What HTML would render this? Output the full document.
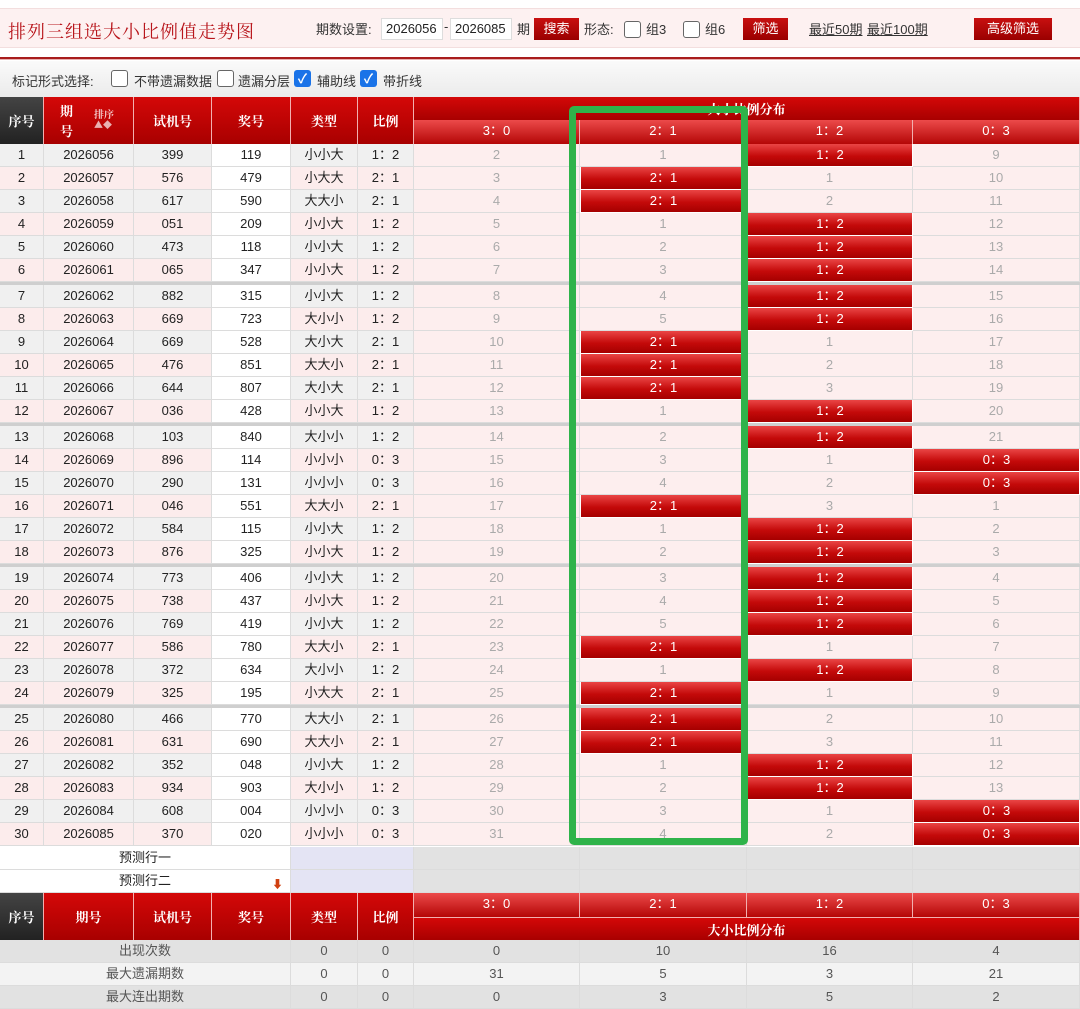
<!DOCTYPE html>
<html><head><meta charset="utf-8">
<style>
*{box-sizing:border-box;margin:0;padding:0}
body{width:1080px;height:1006px;overflow:hidden;background:#fff;font-family:"Liberation Sans","Noto Sans CJK SC",sans-serif;font-size:13px;color:#222;position:relative}
.top{position:absolute;left:0;top:8px;width:1080px;height:40px;background:#fdf1f1;border-top:1px solid #f3dede;border-bottom:1px solid #f3dede}
.title{position:absolute;left:8px;top:9px;font-family:"Noto Serif CJK SC","Liberation Serif",serif;font-size:18px;color:#b8151b;letter-spacing:1px}
.tc{position:absolute;top:10px;font-size:13px;color:#333}
.inp{position:absolute;top:9px;height:22px;background:#fff;border:1px solid #ddd;font-size:13px;padding:2px 4px}
.btn{position:absolute;top:9px;height:22px;background:linear-gradient(#c81010,#9a0000);color:#fff;font-size:13px;text-align:center;line-height:22px}
.cb{position:absolute;width:17px;height:17px;border:1px solid #666;border-radius:3px;background:#fff}
.cbk{position:absolute;width:17px;height:17px;border-radius:3px;background:#1a73e8;color:#fff;font-size:13px;line-height:17px;text-align:center;font-weight:bold}
.redline{position:absolute;left:0;top:57px;width:1080px;height:3px;background:#a81c1c;border-bottom:1px solid #e7b0b0}
.bar2{position:absolute;left:0;top:61px;width:1080px;height:36px;background:linear-gradient(#fafafa,#ebebeb)}
.row{position:absolute;left:0;width:1080px;height:23px;display:flex}
.row>div{height:23px;border-right:1px solid #dcdcdc;border-bottom:1px solid #dcdcdc;text-align:center;line-height:22px;flex:none}
.c1{width:44px}.c2{width:90px}.c3{width:78px}.c4{width:79px}.c5{width:67px}.c6{width:56px}.c7{width:166px}.c8{width:167px}.c9{width:166px}.c10{width:167px}
.o>div{background:#f0f0f0}.e>div{background:#fcecec}
.row>div.w{background:#fff}
.row>div.t{background:#fdeeee;color:#aaa}
.row>div.r{background:linear-gradient(#ea4545,#c40a0a 55%,#a50000);color:#fff;border:1px solid #fff;border-top:none}
.sep{position:absolute;left:0;width:1080px;height:3px;background:#cfcfcf}
.h{position:absolute;background:linear-gradient(#d40808,#a80000);color:#fff;font-weight:bold;text-align:center;border-right:1px solid #f2b0b0;font-family:"Noto Serif CJK SC","Liberation Serif",serif;font-size:13px}
.hs{position:absolute;background:linear-gradient(#ec4a4a,#b40606);color:#fff;text-align:center;border-right:1px solid #f2b0b0;font-size:13px;line-height:22px}
.green{position:absolute;left:569px;top:106px;width:179px;height:739px;border:7px solid #2fb34a;border-radius:5px}
.st>div{color:#555}
</style></head><body>
<div class="top">
<div class="title">排列三组选大小比例值走势图</div>
<div class="tc" style="left:316px">期数设置:</div>
<div class="inp" style="left:381px;width:62px">2026056</div>
<div class="tc" style="left:444px">-</div>
<div class="inp" style="left:450px;width:62px">2026085</div>
<div class="tc" style="left:517px">期</div>
<div class="btn" style="left:534px;width:45px">搜索</div>
<div class="tc" style="left:584px">形态:</div>
<div class="cb" style="left:624px;top:12px"></div><div class="tc" style="left:646px">组3</div>
<div class="cb" style="left:683px;top:12px"></div><div class="tc" style="left:705px">组6</div>
<div class="btn" style="left:743px;width:45px">筛选</div>
<div class="tc" style="left:809px;text-decoration:underline">最近50期</div>
<div class="tc" style="left:867px;text-decoration:underline">最近100期</div>
<div class="btn" style="left:974px;width:78px">高级筛选</div>
</div>
<div class="redline"></div>
<div class="bar2">
<div class="tc" style="left:12px;top:10px">标记形式选择:</div>
<div class="cb" style="left:111px;top:9px"></div><div class="tc" style="left:134px;top:10px">不带遗漏数据</div>
<div class="cb" style="left:217px;top:9px"></div><div class="tc" style="left:238px;top:10px">遗漏分层</div>
<div class="cbk" style="left:294px;top:9px">✓</div><div class="tc" style="left:317px;top:10px">辅助线</div>
<div class="cbk" style="left:360px;top:9px">✓</div><div class="tc" style="left:383px;top:10px">带折线</div>
</div>
<!-- header -->
<div class="h" style="left:0;top:97px;width:44px;height:47px;line-height:47px;background:linear-gradient(#444,#222)">序号</div>
<div class="h" style="left:44px;top:97px;width:90px;height:47px"><div style="position:absolute;left:16px;top:4px">期</div><div style="position:absolute;left:16px;top:24px">号</div><div style="position:absolute;left:50px;top:9px;font-size:10px;color:#f4c8c8">排序</div><div style="position:absolute;left:50px;top:21px;font-size:9px;color:#e9b0b0">▲◆</div></div>
<div class="h" style="left:134px;top:97px;width:78px;height:47px;line-height:47px">试机号</div>
<div class="h" style="left:212px;top:97px;width:79px;height:47px;line-height:47px">奖号</div>
<div class="h" style="left:291px;top:97px;width:67px;height:47px;line-height:47px">类型</div>
<div class="h" style="left:358px;top:97px;width:56px;height:47px;line-height:47px">比例</div>
<div class="h" style="left:414px;top:97px;width:666px;height:23px;line-height:23px">大小比例分布</div>
<div class="hs" style="left:414px;top:120px;width:166px;height:24px">3：0</div>
<div class="hs" style="left:580px;top:120px;width:167px;height:24px">2：1</div>
<div class="hs" style="left:747px;top:120px;width:166px;height:24px">1：2</div>
<div class="hs" style="left:913px;top:120px;width:167px;height:24px">0：3</div>

<div class="row o" style="top:144px"><div class="c1">1</div><div class="c2">2026056</div><div class="c3">399</div><div class="c4 w">119</div><div class="c5">小小大</div><div class="c6">1：2</div><div class="c7 t">2</div><div class="c8 t">1</div><div class="c9 r">1：2</div><div class="c10 t">9</div></div>
<div class="row e" style="top:167px"><div class="c1">2</div><div class="c2">2026057</div><div class="c3">576</div><div class="c4 w">479</div><div class="c5">小大大</div><div class="c6">2：1</div><div class="c7 t">3</div><div class="c8 r">2：1</div><div class="c9 t">1</div><div class="c10 t">10</div></div>
<div class="row o" style="top:190px"><div class="c1">3</div><div class="c2">2026058</div><div class="c3">617</div><div class="c4 w">590</div><div class="c5">大大小</div><div class="c6">2：1</div><div class="c7 t">4</div><div class="c8 r">2：1</div><div class="c9 t">2</div><div class="c10 t">11</div></div>
<div class="row e" style="top:213px"><div class="c1">4</div><div class="c2">2026059</div><div class="c3">051</div><div class="c4 w">209</div><div class="c5">小小大</div><div class="c6">1：2</div><div class="c7 t">5</div><div class="c8 t">1</div><div class="c9 r">1：2</div><div class="c10 t">12</div></div>
<div class="row o" style="top:236px"><div class="c1">5</div><div class="c2">2026060</div><div class="c3">473</div><div class="c4 w">118</div><div class="c5">小小大</div><div class="c6">1：2</div><div class="c7 t">6</div><div class="c8 t">2</div><div class="c9 r">1：2</div><div class="c10 t">13</div></div>
<div class="row e" style="top:259px"><div class="c1">6</div><div class="c2">2026061</div><div class="c3">065</div><div class="c4 w">347</div><div class="c5">小小大</div><div class="c6">1：2</div><div class="c7 t">7</div><div class="c8 t">3</div><div class="c9 r">1：2</div><div class="c10 t">14</div></div>
<div class="sep" style="top:282px"></div>
<div class="row o" style="top:285px"><div class="c1">7</div><div class="c2">2026062</div><div class="c3">882</div><div class="c4 w">315</div><div class="c5">小小大</div><div class="c6">1：2</div><div class="c7 t">8</div><div class="c8 t">4</div><div class="c9 r">1：2</div><div class="c10 t">15</div></div>
<div class="row e" style="top:308px"><div class="c1">8</div><div class="c2">2026063</div><div class="c3">669</div><div class="c4 w">723</div><div class="c5">大小小</div><div class="c6">1：2</div><div class="c7 t">9</div><div class="c8 t">5</div><div class="c9 r">1：2</div><div class="c10 t">16</div></div>
<div class="row o" style="top:331px"><div class="c1">9</div><div class="c2">2026064</div><div class="c3">669</div><div class="c4 w">528</div><div class="c5">大小大</div><div class="c6">2：1</div><div class="c7 t">10</div><div class="c8 r">2：1</div><div class="c9 t">1</div><div class="c10 t">17</div></div>
<div class="row e" style="top:354px"><div class="c1">10</div><div class="c2">2026065</div><div class="c3">476</div><div class="c4 w">851</div><div class="c5">大大小</div><div class="c6">2：1</div><div class="c7 t">11</div><div class="c8 r">2：1</div><div class="c9 t">2</div><div class="c10 t">18</div></div>
<div class="row o" style="top:377px"><div class="c1">11</div><div class="c2">2026066</div><div class="c3">644</div><div class="c4 w">807</div><div class="c5">大小大</div><div class="c6">2：1</div><div class="c7 t">12</div><div class="c8 r">2：1</div><div class="c9 t">3</div><div class="c10 t">19</div></div>
<div class="row e" style="top:400px"><div class="c1">12</div><div class="c2">2026067</div><div class="c3">036</div><div class="c4 w">428</div><div class="c5">小小大</div><div class="c6">1：2</div><div class="c7 t">13</div><div class="c8 t">1</div><div class="c9 r">1：2</div><div class="c10 t">20</div></div>
<div class="sep" style="top:423px"></div>
<div class="row o" style="top:426px"><div class="c1">13</div><div class="c2">2026068</div><div class="c3">103</div><div class="c4 w">840</div><div class="c5">大小小</div><div class="c6">1：2</div><div class="c7 t">14</div><div class="c8 t">2</div><div class="c9 r">1：2</div><div class="c10 t">21</div></div>
<div class="row e" style="top:449px"><div class="c1">14</div><div class="c2">2026069</div><div class="c3">896</div><div class="c4 w">114</div><div class="c5">小小小</div><div class="c6">0：3</div><div class="c7 t">15</div><div class="c8 t">3</div><div class="c9 t">1</div><div class="c10 r">0：3</div></div>
<div class="row o" style="top:472px"><div class="c1">15</div><div class="c2">2026070</div><div class="c3">290</div><div class="c4 w">131</div><div class="c5">小小小</div><div class="c6">0：3</div><div class="c7 t">16</div><div class="c8 t">4</div><div class="c9 t">2</div><div class="c10 r">0：3</div></div>
<div class="row e" style="top:495px"><div class="c1">16</div><div class="c2">2026071</div><div class="c3">046</div><div class="c4 w">551</div><div class="c5">大大小</div><div class="c6">2：1</div><div class="c7 t">17</div><div class="c8 r">2：1</div><div class="c9 t">3</div><div class="c10 t">1</div></div>
<div class="row o" style="top:518px"><div class="c1">17</div><div class="c2">2026072</div><div class="c3">584</div><div class="c4 w">115</div><div class="c5">小小大</div><div class="c6">1：2</div><div class="c7 t">18</div><div class="c8 t">1</div><div class="c9 r">1：2</div><div class="c10 t">2</div></div>
<div class="row e" style="top:541px"><div class="c1">18</div><div class="c2">2026073</div><div class="c3">876</div><div class="c4 w">325</div><div class="c5">小小大</div><div class="c6">1：2</div><div class="c7 t">19</div><div class="c8 t">2</div><div class="c9 r">1：2</div><div class="c10 t">3</div></div>
<div class="sep" style="top:564px"></div>
<div class="row o" style="top:567px"><div class="c1">19</div><div class="c2">2026074</div><div class="c3">773</div><div class="c4 w">406</div><div class="c5">小小大</div><div class="c6">1：2</div><div class="c7 t">20</div><div class="c8 t">3</div><div class="c9 r">1：2</div><div class="c10 t">4</div></div>
<div class="row e" style="top:590px"><div class="c1">20</div><div class="c2">2026075</div><div class="c3">738</div><div class="c4 w">437</div><div class="c5">小小大</div><div class="c6">1：2</div><div class="c7 t">21</div><div class="c8 t">4</div><div class="c9 r">1：2</div><div class="c10 t">5</div></div>
<div class="row o" style="top:613px"><div class="c1">21</div><div class="c2">2026076</div><div class="c3">769</div><div class="c4 w">419</div><div class="c5">小小大</div><div class="c6">1：2</div><div class="c7 t">22</div><div class="c8 t">5</div><div class="c9 r">1：2</div><div class="c10 t">6</div></div>
<div class="row e" style="top:636px"><div class="c1">22</div><div class="c2">2026077</div><div class="c3">586</div><div class="c4 w">780</div><div class="c5">大大小</div><div class="c6">2：1</div><div class="c7 t">23</div><div class="c8 r">2：1</div><div class="c9 t">1</div><div class="c10 t">7</div></div>
<div class="row o" style="top:659px"><div class="c1">23</div><div class="c2">2026078</div><div class="c3">372</div><div class="c4 w">634</div><div class="c5">大小小</div><div class="c6">1：2</div><div class="c7 t">24</div><div class="c8 t">1</div><div class="c9 r">1：2</div><div class="c10 t">8</div></div>
<div class="row e" style="top:682px"><div class="c1">24</div><div class="c2">2026079</div><div class="c3">325</div><div class="c4 w">195</div><div class="c5">小大大</div><div class="c6">2：1</div><div class="c7 t">25</div><div class="c8 r">2：1</div><div class="c9 t">1</div><div class="c10 t">9</div></div>
<div class="sep" style="top:705px"></div>
<div class="row o" style="top:708px"><div class="c1">25</div><div class="c2">2026080</div><div class="c3">466</div><div class="c4 w">770</div><div class="c5">大大小</div><div class="c6">2：1</div><div class="c7 t">26</div><div class="c8 r">2：1</div><div class="c9 t">2</div><div class="c10 t">10</div></div>
<div class="row e" style="top:731px"><div class="c1">26</div><div class="c2">2026081</div><div class="c3">631</div><div class="c4 w">690</div><div class="c5">大大小</div><div class="c6">2：1</div><div class="c7 t">27</div><div class="c8 r">2：1</div><div class="c9 t">3</div><div class="c10 t">11</div></div>
<div class="row o" style="top:754px"><div class="c1">27</div><div class="c2">2026082</div><div class="c3">352</div><div class="c4 w">048</div><div class="c5">小小大</div><div class="c6">1：2</div><div class="c7 t">28</div><div class="c8 t">1</div><div class="c9 r">1：2</div><div class="c10 t">12</div></div>
<div class="row e" style="top:777px"><div class="c1">28</div><div class="c2">2026083</div><div class="c3">934</div><div class="c4 w">903</div><div class="c5">大小小</div><div class="c6">1：2</div><div class="c7 t">29</div><div class="c8 t">2</div><div class="c9 r">1：2</div><div class="c10 t">13</div></div>
<div class="row o" style="top:800px"><div class="c1">29</div><div class="c2">2026084</div><div class="c3">608</div><div class="c4 w">004</div><div class="c5">小小小</div><div class="c6">0：3</div><div class="c7 t">30</div><div class="c8 t">3</div><div class="c9 t">1</div><div class="c10 r">0：3</div></div>
<div class="row e" style="top:823px"><div class="c1">30</div><div class="c2">2026085</div><div class="c3">370</div><div class="c4 w">020</div><div class="c5">小小小</div><div class="c6">0：3</div><div class="c7 t">31</div><div class="c8 t">4</div><div class="c9 t">2</div><div class="c10 r">0：3</div></div>

<!-- prediction rows -->
<div class="row" style="top:847px"><div style="width:291px;background:#fff">预测行一</div><div style="width:123px;background:#e4e4f4"></div><div class="c7" style="background:#e2e2e2"></div><div class="c8" style="background:#e2e2e2"></div><div class="c9" style="background:#e2e2e2"></div><div class="c10" style="background:#e2e2e2"></div></div>
<div class="row" style="top:870px"><div style="width:291px;background:#fff;position:relative">预测行二<span style="position:absolute;left:272px;top:4px;color:#d04010;font-size:11px">⬇</span></div><div style="width:123px;background:#e4e4f4"></div><div class="c7" style="background:#e2e2e2"></div><div class="c8" style="background:#e2e2e2"></div><div class="c9" style="background:#e2e2e2"></div><div class="c10" style="background:#e2e2e2"></div></div>

<!-- footer header -->
<div class="h" style="left:0;top:893px;width:44px;height:47px;line-height:47px;background:linear-gradient(#444,#222)">序号</div>
<div class="h" style="left:44px;top:893px;width:90px;height:47px;line-height:47px">期号</div>
<div class="h" style="left:134px;top:893px;width:78px;height:47px;line-height:47px">试机号</div>
<div class="h" style="left:212px;top:893px;width:79px;height:47px;line-height:47px">奖号</div>
<div class="h" style="left:291px;top:893px;width:67px;height:47px;line-height:47px">类型</div>
<div class="h" style="left:358px;top:893px;width:56px;height:47px;line-height:47px">比例</div>
<div class="hs" style="left:414px;top:893px;width:166px;height:24px">3：0</div>
<div class="hs" style="left:580px;top:893px;width:167px;height:24px">2：1</div>
<div class="hs" style="left:747px;top:893px;width:166px;height:24px">1：2</div>
<div class="hs" style="left:913px;top:893px;width:167px;height:24px">0：3</div>
<div class="h" style="left:414px;top:917px;width:666px;height:23px;line-height:23px;border-top:1px solid #f2b0b0">大小比例分布</div>

<div class="row st" style="top:940px"><div style="width:291px;background:#e2e2e2">出现次数</div><div class="c5" style="background:#e2e2e2">0</div><div class="c6" style="background:#e2e2e2">0</div><div class="c7" style="background:#e2e2e2">0</div><div class="c8" style="background:#e2e2e2">10</div><div class="c9" style="background:#e2e2e2">16</div><div class="c10" style="background:#e2e2e2">4</div></div>
<div class="row st" style="top:963px"><div style="width:291px;background:#f3f3f3">最大遗漏期数</div><div class="c5" style="background:#f3f3f3">0</div><div class="c6" style="background:#f3f3f3">0</div><div class="c7" style="background:#f3f3f3">31</div><div class="c8" style="background:#f3f3f3">5</div><div class="c9" style="background:#f3f3f3">3</div><div class="c10" style="background:#f3f3f3">21</div></div>
<div class="row st" style="top:986px"><div style="width:291px;background:#e2e2e2">最大连出期数</div><div class="c5" style="background:#e2e2e2">0</div><div class="c6" style="background:#e2e2e2">0</div><div class="c7" style="background:#e2e2e2">0</div><div class="c8" style="background:#e2e2e2">3</div><div class="c9" style="background:#e2e2e2">5</div><div class="c10" style="background:#e2e2e2">2</div></div>

<div class="green"></div>
</body></html>
